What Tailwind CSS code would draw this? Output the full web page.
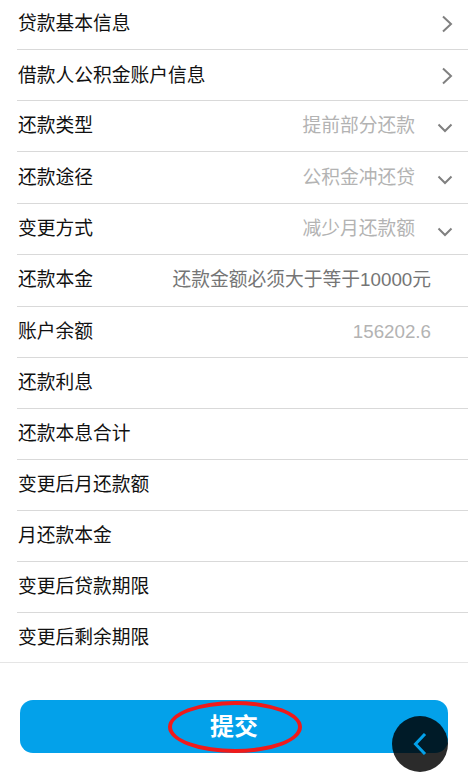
<!DOCTYPE html>
<html lang="zh-CN">
  <head>
    <meta charset="UTF-8" />
    <meta name="viewport" content="width=device-width, initial-scale=1.0" />
    <title>提前还款</title>
    <script src="https://cdn.jsdelivr.net/npm/@tailwindcss/browser@4"></script>
  </head>
  <body class="bg-white h-[775px] w-[468px] overflow-hidden relative font-['Liberation_Sans','Noto_Sans_CJK_SC',sans-serif] text-[18.75px] text-[#111]">
    <ul class="border-b border-[#e5e5e5]">
      <li class="h-[51px] -mt-[1px] ml-[17px] pl-px border-b border-[#d9d9d9] flex items-center justify-between">
        <span>贷款基本信息</span>
        <svg class="w-[14px] h-[18px] mr-[15px]" viewBox="0 0 14 18" fill="none" stroke="#808080" stroke-width="2"><path d="M4 1.5 L12 9 L4 16.5"/></svg>
      </li>
      <li class="h-[51px] pt-[2px] ml-[17px] pl-px border-b border-[#d9d9d9] flex items-center justify-between">
        <span>借款人公积金账户信息</span>
        <svg class="w-[14px] h-[18px] mr-[15px]" viewBox="0 0 14 18" fill="none" stroke="#808080" stroke-width="2"><path d="M4 1.5 L12 9 L4 16.5"/></svg>
      </li>
      <li class="h-[51px] ml-[17px] pl-px border-b border-[#d9d9d9] flex items-center justify-between">
        <span>还款类型</span>
        <span class="flex items-center text-[#b3b3b3]">提前部分还款<svg class="w-[16px] h-[10px] ml-[22px] mr-[15px] mt-[4px]" viewBox="0 0 16 10" fill="none" stroke="#808080" stroke-width="2"><path d="M1.5 1.5 L8 8 L14.5 1.5"/></svg></span>
      </li>
      <li class="h-[52px] pt-[2px] ml-[17px] pl-px border-b border-[#d9d9d9] flex items-center justify-between">
        <span>还款途径</span>
        <span class="flex items-center text-[#b3b3b3]">公积金冲还贷<svg class="w-[16px] h-[10px] ml-[22px] mr-[15px] mt-[2px]" viewBox="0 0 16 10" fill="none" stroke="#808080" stroke-width="2"><path d="M1.5 1.5 L8 8 L14.5 1.5"/></svg></span>
      </li>
      <li class="h-[51px] ml-[17px] pl-px border-b border-[#d9d9d9] flex items-center justify-between">
        <span>变更方式</span>
        <span class="flex items-center text-[#b3b3b3]">减少月还款额<svg class="w-[16px] h-[10px] ml-[22px] mr-[15px] mt-[5px]" viewBox="0 0 16 10" fill="none" stroke="#808080" stroke-width="2"><path d="M1.5 1.5 L8 8 L14.5 1.5"/></svg></span>
      </li>
      <li class="h-[52px] ml-[17px] pl-px pr-[37px] border-b border-[#d9d9d9] flex items-center justify-between">
        <span>还款本金</span>
        <span class="text-[#757575]">还款金额必须大于等于10000元</span>
      </li>
      <li class="h-[51px] ml-[17px] pl-px pr-[37px] border-b border-[#d9d9d9] flex items-center justify-between">
        <span>账户余额</span>
        <span class="text-[#b3b3b3]">156202.6</span>
      </li>
      <li class="h-[51px] ml-[17px] pl-px border-b border-[#d9d9d9] flex items-center">还款利息</li>
      <li class="h-[51px] ml-[17px] pl-px border-b border-[#d9d9d9] flex items-center">还款本息合计</li>
      <li class="h-[51px] ml-[17px] pl-px border-b border-[#d9d9d9] flex items-center">变更后月还款额</li>
      <li class="h-[51px] ml-[17px] pl-px border-b border-[#d9d9d9] flex items-center">月还款本金</li>
      <li class="h-[51px] ml-[17px] pl-px border-b border-[#d9d9d9] flex items-center">变更后贷款期限</li>
      <li class="h-[49px] pt-px ml-[17px] pl-px flex items-center">变更后剩余期限</li>
    </ul>

    <div class="px-[20px] pt-[37px]">
      <button class="relative w-full h-[53px] rounded-[13px] bg-[#03a1ea] text-white text-[24px] font-bold flex items-center justify-center">
        提交
        <span class="absolute left-[148px] top-[1px] w-[134px] h-[52px] rounded-[50%] border-4 border-[#f01a1a]"></span>
      </button>
    </div>

    <div class="absolute left-[392px] top-[716px] w-[56px] h-[56px] rounded-full bg-black/83 flex items-center justify-center">
      <svg class="w-[14px] h-[22px]" viewBox="0 0 14 22" fill="none" stroke="#03a1ea" stroke-width="3"><path d="M12 1 L2.5 11 L12 21"/></svg>
    </div>
  </body>
</html>
